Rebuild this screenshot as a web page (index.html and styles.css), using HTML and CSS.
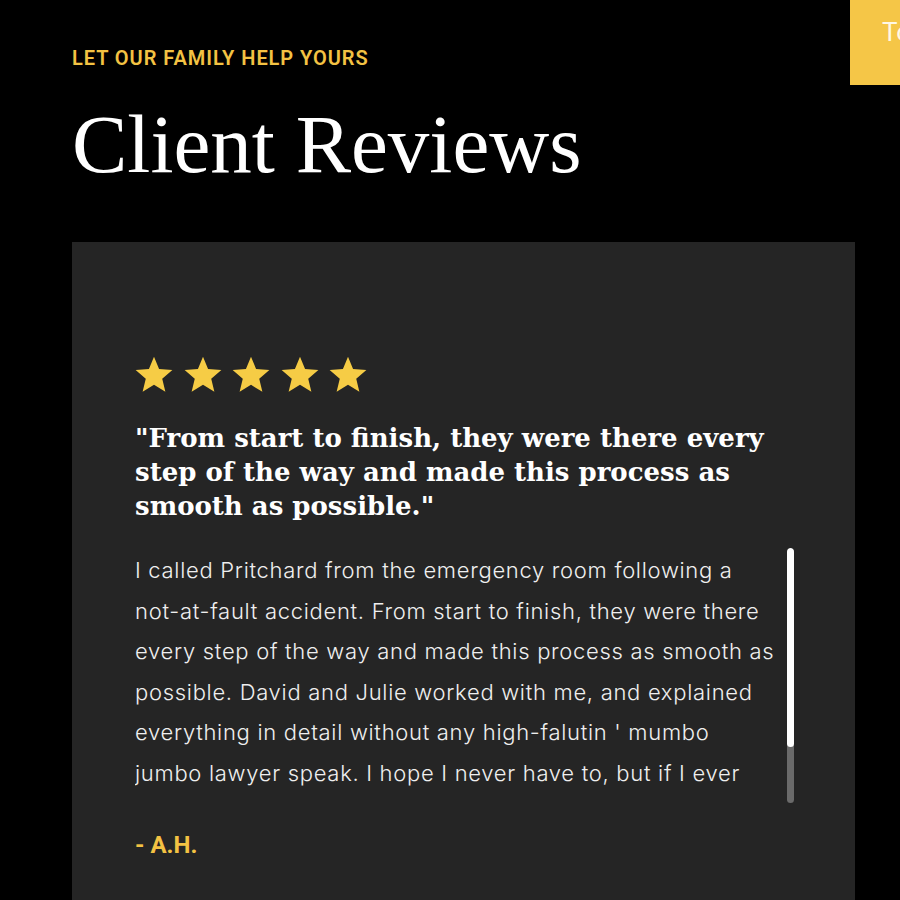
FILE: index.html
```html
<!DOCTYPE html>
<html lang="en">
<head>
<meta charset="utf-8">
<title>Client Reviews</title>
<link rel="stylesheet" href="styles.css">
</head>
<body>
<a class="top-btn" href="#">Top</a>
<section class="reviews">
  <p class="eyebrow">LET OUR FAMILY HELP YOURS</p>
  <h1 class="title">Client Reviews</h1>
  <div class="card">
    <div class="stars">
      <svg class="star" viewBox="0 0 24 24"><polygon points="12,1.5 14.9,8.6 22.5,9.2 16.7,14.1 18.5,21.6 12,17.6 5.5,21.6 7.3,14.1 1.5,9.2 9.1,8.6"/></svg>
      <svg class="star" viewBox="0 0 24 24"><polygon points="12,1.5 14.9,8.6 22.5,9.2 16.7,14.1 18.5,21.6 12,17.6 5.5,21.6 7.3,14.1 1.5,9.2 9.1,8.6"/></svg>
      <svg class="star" viewBox="0 0 24 24"><polygon points="12,1.5 14.9,8.6 22.5,9.2 16.7,14.1 18.5,21.6 12,17.6 5.5,21.6 7.3,14.1 1.5,9.2 9.1,8.6"/></svg>
      <svg class="star" viewBox="0 0 24 24"><polygon points="12,1.5 14.9,8.6 22.5,9.2 16.7,14.1 18.5,21.6 12,17.6 5.5,21.6 7.3,14.1 1.5,9.2 9.1,8.6"/></svg>
      <svg class="star" viewBox="0 0 24 24"><polygon points="12,1.5 14.9,8.6 22.5,9.2 16.7,14.1 18.5,21.6 12,17.6 5.5,21.6 7.3,14.1 1.5,9.2 9.1,8.6"/></svg>
    </div>
    <blockquote class="quote">"From start to finish, they were there every step of the way and made this process as smooth as possible."</blockquote>
    <div class="body-row">
      <div class="body-view">
        <p class="body-text">I called Pritchard from the emergency room following a <span class="nw">not-at-fault</span> accident. From start to finish, they were there every step of the way and made this process as smooth as possible. David and Julie worked with me, and explained everything in detail without any <span class="nw">high-falutin</span> ' mumbo jumbo lawyer speak. I hope I never have to, but if I ever need a lawyer again, I know exactly who I will be calling. Thank you!</p>
      </div>
      <div class="scrollbar"><div class="thumb"></div></div>
    </div>
    <p class="author">- A.H.</p>
  </div>
</section>
</body>
</html>
```
FILE: styles.css
```css
html, body {
  margin: 0;
  padding: 0;
  background: #000;
  overflow: hidden;
}
body {
  font-family: Roboto, "Liberation Sans", sans-serif;
  color: #fff;
  position: relative;
  min-height: 900px;
}
.top-btn {
  position: absolute;
  top: 0;
  left: 850px;
  width: 50px;
  height: 85px;
  overflow: hidden;
  white-space: nowrap;
  background: #f5c647;
  color: #fff8e6;
  font-family: Roboto, sans-serif;
  font-size: 26px;
  font-weight: 400;
  text-decoration: none;
  box-sizing: border-box;
  padding: 17px 0 0 32px;
}
.reviews {
  padding: 46px 0 0 72px;
}
.eyebrow {
  margin: 0;
  color: #f3c243;
  font-size: 20px;
  font-weight: 600;
  letter-spacing: 0.95px;
  line-height: 24px;
}
.title {
  margin: 24px 0 0 0;
  font-family: "Liberation Serif", serif;
  font-weight: 400;
  font-size: 83px;
  line-height: 100px;
  color: #fff;
}
.card {
  margin-top: 48px;
  width: 783px;
  height: 700px;
  background: #252525;
  box-sizing: border-box;
  padding: 112px 0 0 63px;
}
.stars {
  display: flex;
  gap: 6.5px;
  margin-left: -2px;
}
.star {
  width: 42px;
  height: 42px;
  fill: #f6cc45;
}
.quote {
  margin: 25px 0 0 0;
  width: 645px;
  font-family: "DejaVu Serif", serif;
  font-weight: 700;
  font-size: 26px;
  line-height: 34px;
  color: #fff;
}
.body-row {
  display: flex;
  gap: 8px;
  margin-top: 25px;
}
.body-view {
  width: 644px;
  height: 255px;
  overflow: hidden;
}
.body-text {
  margin: 0;
  padding-top: 2px;
  font-family: Inter, sans-serif;
  font-weight: 300;
  font-size: 22px;
  letter-spacing: 0.7px;
  line-height: 40.5px;
  color: #efefef;
}
.nw {
  white-space: nowrap;
}
.scrollbar {
  width: 7px;
  height: 255px;
  background: #6a6a6a;
  border-radius: 4px;
  overflow: hidden;
}
.thumb {
  height: 199px;
  background: #fff;
  border-radius: 4px;
}
.author {
  margin: 28px 0 0 0;
  color: #f3c243;
  font-size: 24px;
  font-weight: 700;
  line-height: 28px;
}
```
